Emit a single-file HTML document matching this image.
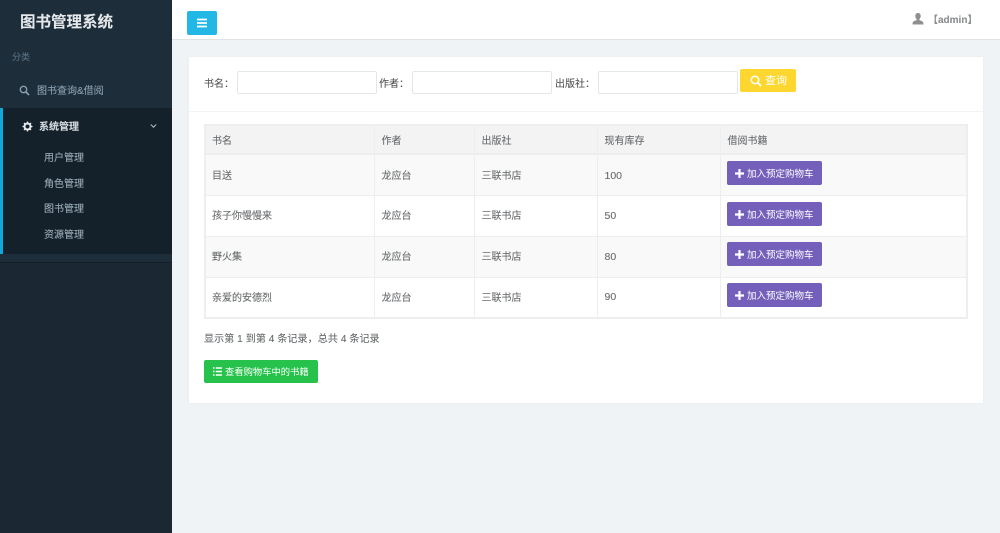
<!DOCTYPE html>
<html lang="zh-CN"><head><meta charset="utf-8"><title>图书管理系统</title>
<style>
*{box-sizing:border-box}
html,body{margin:0;padding:0;width:1000px;height:533px;overflow:hidden;background:#eff3f5}
body{font-family:"Liberation Sans","Noto Sans CJK SC",sans-serif;font-size:10px;color:#676a6c;position:relative}
.a{position:absolute;white-space:nowrap;line-height:14px}
#root{position:absolute;left:0;top:0;width:1000px;height:533px;filter:blur(.3px);-webkit-text-stroke:.1px currentColor}
.side{position:absolute;left:0;top:0;width:172px;height:533px;background:#1e2d3a}
.act{position:absolute;left:0;top:108px;width:172px;height:146px;background:#14202a;border-left:3px solid #0fa8d8}
.sb{position:absolute;left:0;top:254px;width:172px;height:9px;background:#1e2d3a;border-bottom:1px solid #131e27}
.low{position:absolute;left:0;top:263px;width:172px;height:270px;background:#1b2834}
.sub{color:#9aabb8;left:44px}
.top{position:absolute;left:172px;top:0;width:828px;height:40px;background:#fff;border-bottom:1px solid #dfe3e5}
.panel{position:absolute;left:189px;top:57px;width:794px;height:346px;background:#fff;box-shadow:0 0 2px #e4e8ea}
.hr{position:absolute;left:189px;top:111px;width:794px;height:1px;background:#f1f3f4}
input{position:absolute;top:71px;height:23px;background:#fff;border:1px solid #e2e8ea;border-radius:2px;padding:0;margin:0}
.ybtn{position:absolute;left:740px;top:69px;width:56px;height:23px;background:#fdd72f;border-radius:2px;color:#fff;font-size:11px;line-height:25px;-webkit-text-stroke:0}
table{position:absolute;left:204px;top:124px;width:764px;height:194px;border-collapse:collapse;table-layout:fixed;border:2px solid #eeeeee;font-size:10px;color:#676a6c}
td,th{border:1px solid #eeeeee;padding:0 0 0 6px;text-align:left;font-weight:400;overflow:hidden;white-space:nowrap}
td+td,th+th{padding-left:7px}
th{background:#f3f3f4;height:29px;border-bottom:2px solid #eeeeee}
tr.o td{background:#f9f9f9}
tr.o td,tr.e td{height:41px}
tr.u td{padding-bottom:2px}
td span{position:relative;top:1px;font-size:10.5px}
.pb{position:absolute;left:727px;width:95px;height:24px;background:#7460bb;border-radius:2px;color:#fff;font-size:9.5px;line-height:27px;padding-left:20px;-webkit-text-stroke:0}
.pb svg{position:absolute;left:8px;top:7.5px}
.gb{position:absolute;left:204px;top:360px;width:114px;height:23px;background:#27c24c;border-radius:2px;color:#fff;font-size:9.3px;line-height:25px;padding-left:21px;-webkit-text-stroke:0}
</style></head><body>
<div id="root">
<div class="side"></div>
<div class="act"></div>
<div class="sb"></div>
<div class="low"></div>
<div class="a" style="left:20px;top:14px;font-size:15.5px;line-height:18px;font-weight:700;color:#e4e8eb">图书管理系统</div>
<div class="a" style="left:12px;top:50px;font-size:9px;color:#5a7285">分类</div>
<svg class="a" style="left:19px;top:85px" width="11" height="11" viewBox="0 0 11 11"><circle cx="4.5" cy="4.5" r="3.2" fill="none" stroke="#8a9fae" stroke-width="1.4"/><path d="M7 7l3 3" stroke="#8a9fae" stroke-width="1.6"/></svg>
<div class="a" style="left:37px;top:85px;font-size:10px;color:#8ba1b1">图书查询&amp;借阅</div>
<svg class="a" style="left:22px;top:121px" width="11" height="11" viewBox="0 0 11 11"><circle cx="5.5" cy="5.5" r="3" fill="none" stroke="#e8ecef" stroke-width="2"/><path d="M5.5 0.5v2M5.5 8.500v2M0.500 5.500h2M8.500 5.500h2M2 2l1.400 1.400M7.600 7.600l1.400 1.400M9 2l-1.400 1.400M3.400 7.600l-1.400 1.400" stroke="#e8ecef" stroke-width="1.300"/></svg>
<div class="a" style="left:39px;top:121px;font-size:10px;font-weight:700;color:#d3dae0">系统管理</div>
<svg class="a" style="left:150px;top:123px" width="7" height="6" viewBox="0 0 7 6"><path d="M.8 1.500L3.500 4.200 6.200 1.500" fill="none" stroke="#a8b4bd" stroke-width="1.100"/></svg>
<div class="a sub" style="top:152px">用户管理</div>
<div class="a sub" style="top:178px">角色管理</div>
<div class="a sub" style="top:203px">图书管理</div>
<div class="a sub" style="top:229px">资源管理</div>

<div class="top"></div>
<div class="a" style="left:187px;top:11px;width:30px;height:24px;background:#23b7e5;border-radius:2px"></div>
<svg class="a" style="left:197px;top:18px" width="10" height="10" viewBox="0 0 10 10"><path d="M0 1.500h10M0 5h10M0 8.500h10" stroke="#fff" stroke-width="1.700"/></svg>
<svg class="a" style="left:912px;top:13px" width="12" height="12" viewBox="0 0 12 12"><path d="M6 0C4.200 0 3.300 1.300 3.300 3c0 1.300.5 2.400 1.300 3.100v1C3 7.700.6 8.300.6 10.200V11.500h10.800v-1.300C11.400 8.300 9 7.700 7.400 7.100v-1C8.200 5.400 8.700 4.300 8.700 3 8.700 1.300 7.800 0 6 0z" fill="#8f8f8f"/></svg>
<div class="a" style="left:928px;top:14px;font-size:10px;font-weight:700;color:#8b8e90">【admin】</div>

<div class="panel"></div>
<div class="hr"></div>
<div class="a" style="left:204px;top:77px;color:#555;line-height:16px">书名：</div>
<input style="left:237px;width:140px">
<div class="a" style="left:379px;top:77px;color:#555;line-height:16px">作者：</div>
<input style="left:412px;width:140px">
<div class="a" style="left:555px;top:77px;color:#555;line-height:16px">出版社：</div>
<input style="left:598px;width:140px">
<div class="ybtn"><svg style="position:absolute;left:10px;top:5.500px" width="12" height="12" viewBox="0 0 12 12"><circle cx="5" cy="5" r="3.700" fill="none" stroke="#fff" stroke-width="1.500"/><path d="M7.800 7.800L11 11" stroke="#fff" stroke-width="1.800"/></svg><span style="position:absolute;left:25px;top:0">查询</span></div>

<table>
<colgroup><col style="width:169px"><col style="width:100px"><col style="width:123px"><col style="width:123px"><col></colgroup>
<tr><th>书名</th><th>作者</th><th>出版社</th><th>现有库存</th><th>借阅书籍</th></tr>
<tr class="o"><td>目送</td><td>龙应台</td><td>三联书店</td><td><span>100</span></td><td></td></tr>
<tr class="e u"><td>孩子你慢慢来</td><td>龙应台</td><td>三联书店</td><td><span>50</span></td><td></td></tr>
<tr class="o u"><td>野火集</td><td>龙应台</td><td>三联书店</td><td><span>80</span></td><td></td></tr>
<tr class="e u"><td>亲爱的安德烈</td><td>龙应台</td><td>三联书店</td><td><span>90</span></td><td></td></tr>
</table>
<div class="pb" style="top:161px"><svg width="9" height="9" viewBox="0 0 9 9"><path d="M4.500 0v9M0 4.500h9" stroke="#fff" stroke-width="2.200"/></svg>加入预定购物车</div>
<div class="pb" style="top:202px"><svg width="9" height="9" viewBox="0 0 9 9"><path d="M4.500 0v9M0 4.500h9" stroke="#fff" stroke-width="2.200"/></svg>加入预定购物车</div>
<div class="pb" style="top:242px"><svg width="9" height="9" viewBox="0 0 9 9"><path d="M4.500 0v9M0 4.500h9" stroke="#fff" stroke-width="2.200"/></svg>加入预定购物车</div>
<div class="pb" style="top:283px"><svg width="9" height="9" viewBox="0 0 9 9"><path d="M4.500 0v9M0 4.500h9" stroke="#fff" stroke-width="2.200"/></svg>加入预定购物车</div>

<div class="a" style="left:204px;top:332px;font-size:10px;line-height:15px;letter-spacing:.1px;color:#676a6c">显示第 1 到第 4 条记录，总共 4 条记录</div>
<div class="gb"><svg style="position:absolute;left:9px;top:7px" width="9" height="9" viewBox="0 0 9 9"><path d="M0 1h1.500M0 4.500h1.500M0 8h1.500M2.800 1H9M2.800 4.500H9M2.800 8H9" stroke="#fff" stroke-width="1.600"/></svg>查看购物车中的书籍</div>
</div>
</body></html>
